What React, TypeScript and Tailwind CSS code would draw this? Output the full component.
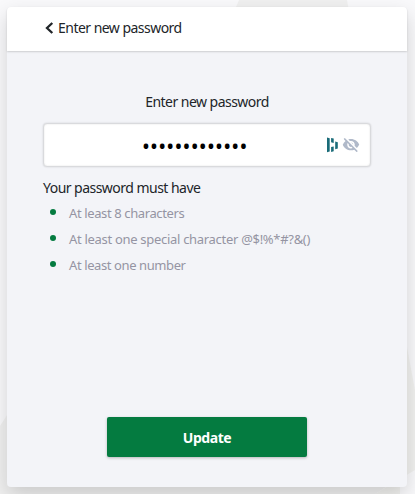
import React from "react";

const rules = [
  { text: "At least 8 characters", spacing: "tracking-[-0.38px]" },
  { text: "At least one special character @$!%*#?&()", spacing: "tracking-[-0.3px]" },
  { text: "At least one number", spacing: "tracking-[-0.4px]" },
];

function Backdrop() {
  return (
    <svg className="absolute inset-0" width="415" height="494" viewBox="0 0 415 494" aria-hidden="true">
      <polygon points="239,0 347,0 354,40 222,40" fill="#f0f0f0" />
      <polygon points="0,426 30,380 380,380 405,475 375,494 0,494" fill="#f0f0f0" />
      <polygon points="400,310 415,390 415,470 375,494 400,494" fill="#f1f1ef" />
    </svg>
  );
}

function BarsIcon() {
  return (
    <svg width="12" height="16" viewBox="0 0 12 16" fill="#196b78" aria-hidden="true">
      <path d="M0 .5 2.7 1.2V14.6L0 15.3ZM4.1 .9 6.7 1.6V6L4.1 5.3ZM4.1 10 6.7 9.5V14.2L4.1 15ZM8.2 4.6 10.8 5.3V11.5L8.2 12.2Z" />
    </svg>
  );
}

function HiddenEyeIcon() {
  return (
    <svg width="18" height="18" viewBox="0 0 24 24" fill="#b0b9c9" aria-hidden="true">
      <path d="M12 6.5c2.76 0 5 2.24 5 5 0 .51-.1 1-.24 1.46l3.06 3.06c1.39-1.23 2.49-2.77 3.18-4.53C21.27 7.11 17 4 12 4c-1.27 0-2.49.2-3.64.57l2.17 2.17c.47-.14.96-.24 1.47-.24zM2.71 3.16c-.39.39-.39 1.02 0 1.41l1.97 1.97C3.06 7.83 1.77 9.53 1 11.5 2.73 15.89 7 19 12 19c1.52 0 2.97-.3 4.31-.82l2.72 2.72c.39.39 1.02.39 1.41 0 .39-.39.39-1.02 0-1.41L4.13 3.16c-.39-.39-1.03-.39-1.42 0zM12 16.5c-2.76 0-5-2.24-5-5 0-.77.18-1.5.49-2.14l1.57 1.57c-.03.18-.06.37-.06.57 0 1.66 1.34 3 3 3 .2 0 .38-.03.57-.07L14.14 16c-.65.32-1.37.5-2.14.5zm2.97-5.33c-.15-1.4-1.25-2.49-2.64-2.64l2.64 2.64z" />
    </svg>
  );
}

export default function App() {
  return (
    <div className="relative h-[494px] w-[415px] overflow-hidden bg-[#f9f9fb] p-[7px] font-['Noto_Sans',sans-serif] text-[#212529]">
      <Backdrop />
      <main className="relative flex h-[480px] w-[400px] flex-col rounded-[4px] bg-[#f3f4f8] shadow-[0_8px_20px_rgba(0,0,0,0.16)]">
        <header className="flex h-11 shrink-0 items-center rounded-t-[4px] bg-white pl-[38px] shadow-[0_1px_2px_rgba(0,0,0,0.16)]">
          <svg className="-mt-0.5" width="9" height="12" viewBox="0 0 9 12" fill="none" stroke="#212529" strokeWidth="2.3" aria-hidden="true">
            <path d="M7.3 1 2 6l5.3 5" />
          </svg>
          <span className="-mt-0.5 ml-1 text-[14px] leading-5 tracking-[-0.53px]">Enter new password</span>
        </header>
        <section className="flex flex-1 flex-col px-9 pt-[41px]">
          <label className="text-center text-[14px] leading-5 tracking-[-0.53px]">Enter new password</label>
          <div className="mt-[11px] flex h-11 w-[328px] items-center rounded-[4px] border border-[#d9dadd] bg-white shadow-[0_0_2px_rgba(0,0,0,0.15),inset_0_0_2px_rgba(0,0,0,0.12)]">
            <span className="ml-[98px] w-[185px] whitespace-nowrap pt-[1px] text-[21px] leading-5 tracking-[0.22px] text-black">•••••••••••••</span>
            <BarsIcon />
            <span className="ml-[3px]"><HiddenEyeIcon /></span>
          </div>
          <h2 className="mt-[11px] text-[14px] leading-5 tracking-[-0.53px]">Your password must have</h2>
          <ul className="mt-[3px] text-[13px] text-[#9594a3]">
            {rules.map((rule) => (
              <li key={rule.text} className="flex h-[26px] items-center">
                <span className="-mt-1 ml-[7px] mr-[13px] size-1.5 shrink-0 rounded-full bg-[#047b40]" />
                <span className={rule.spacing}>{rule.text}</span>
              </li>
            ))}
          </ul>
          <button className="mb-[30px] mt-auto h-10 w-[200px] self-center rounded-[2px] bg-[#047b40] text-[14px] font-bold tracking-[-0.45px] text-white shadow-[0_1px_3px_rgba(0,0,0,0.25)]">Update</button>
        </section>
      </main>
    </div>
  );
}
